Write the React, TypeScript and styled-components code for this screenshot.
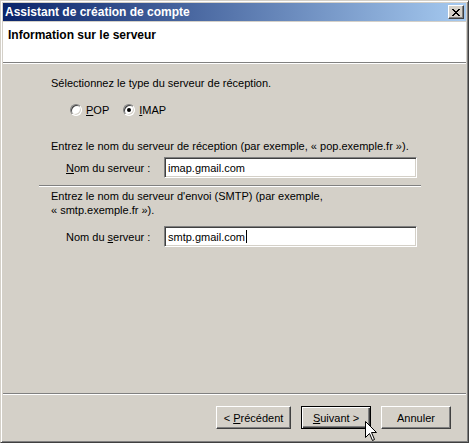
import React from 'react'
import styled, { createGlobalStyle } from 'styled-components'

const GlobalStyle = createGlobalStyle`
  html, body {
    margin: 0;
    padding: 0;
    background: #d4d0c8;
  }
  body {
    font-family: "Liberation Sans", Arial, sans-serif;
    font-size: 11px;
    color: #000;
  }
`

const App: React.FC = () => {
  return (
    <>
      <GlobalStyle />
      <Window>
        <TitleBar>
          <Title>Assistant de création de compte</Title>
          <CloseButton aria-label='Fermer'>
            <svg width='8' height='7' viewBox='0 0 8 7' shapeRendering='crispEdges'>
              <path
                fill='#000'
                d='M0 0h2v1H0zM6 0h2v1H6zM1 1h2v1H1zM5 1h2v1H5zM2 2h4v1H2zM3 3h2v1H3zM2 4h4v1H2zM1 5h2v1H1zM5 5h2v1H5zM0 6h2v1H0zM6 6h2v1H6z'
              />
            </svg>
          </CloseButton>
        </TitleBar>

        <Header>
          <HeaderTitle>Information sur le serveur</HeaderTitle>
        </Header>

        <Body>
          <Content>
            <Section>
              <Text>Sélectionnez le type du serveur de réception.</Text>
              <RadioGroup>
                <RadioOption>
                  <RadioMark />
                  <span><u>P</u>OP</span>
                </RadioOption>
                <RadioOption>
                  <RadioMark $checked />
                  <span><u>I</u>MAP</span>
                </RadioOption>
              </RadioGroup>
            </Section>

            <Section $gap={22}>
              <Text>Entrez le nom du serveur de réception (par exemple, « pop.exemple.fr »).</Text>
              <FieldRow $gap={4}>
                <Label><u>N</u>om du serveur :</Label>
                <TextBox>imap.gmail.com</TextBox>
              </FieldRow>
            </Section>

            <Separator />

            <Section $gap={2}>
              <Text>
                Entrez le nom du serveur d'envoi (SMTP) (par exemple,
                <br />« smtp.exemple.fr »).
              </Text>
              <FieldRow $gap={9}>
                <Label>Nom du <u>s</u>erveur :</Label>
                <TextBox>
                  smtp.gmail.com
                  <Caret />
                </TextBox>
              </FieldRow>
            </Section>
          </Content>
        </Body>

        <Footer>
          <ButtonRow>
            <Button $width={75}>&lt; <u>P</u>récédent</Button>
            <Button $width={70} $default><u>S</u>uivant &gt;</Button>
            <Button $width={70}>Annuler</Button>
          </ButtonRow>
        </Footer>

        <Pointer width='13' height='21' viewBox='0 0 13 21'>
          <path
            d='M0.5 0.5 L0.5 16.5 L4.5 12.5 L7.5 19.5 L9.5 18.5 L6.5 11.5 L11.5 11.5 Z'
            fill='#fff'
            stroke='#000'
            strokeWidth='1'
          />
        </Pointer>
      </Window>
    </>
  )
}

export default App


const Window = styled.div`
position: relative;
box-sizing: border-box;
width: 469px;
height: 443px;
padding: 1px;
display: flex;
flex-direction: column;
background: #d4d0c8;
border: 1px solid;
border-color: #d4d0c8 #404040 #404040 #d4d0c8;
box-shadow: inset 1px 1px 0 #fff, inset -1px -1px 0 #808080;
overflow: hidden;
`

const TitleBar = styled.div`
height: 18px;
margin: 1px;
display: flex;
align-items: center;
justify-content: space-between;
padding: 0 2px;
background: linear-gradient(to right, #0a246a, #a6caf0);
`

const Title = styled.span`
color: #fff;
font-weight: bold;
font-size: 12px;
white-space: nowrap;
`

const CloseButton = styled.div`
box-sizing: border-box;
width: 16px;
height: 14px;
display: flex;
align-items: center;
justify-content: center;
background: #d4d0c8;
border: 1px solid;
border-color: #fff #404040 #404040 #fff;
box-shadow: inset -1px -1px 0 #808080;
`

const Header = styled.div`
height: 41px;
margin: 0 1px;
box-sizing: border-box;
padding: 6px 0 0 5px;
background: #fff;
border-bottom: 1px solid #808080;
box-shadow: 0 1px 0 #fff;
`

const HeaderTitle = styled.h1`
margin: 0;
font-size: 12px;
line-height: 14px;
font-weight: bold;
`

const Body = styled.div`
flex: 1;
padding: 13px 0 0 37px;
`

const Content = styled.div`
width: 382px;
display: flex;
flex-direction: column;
`

const Section = styled.div<{ $gap?: number }>`
margin-top: ${(p) => p.$gap ?? 0}px;
padding-left: 12px;
display: flex;
flex-direction: column;
`

const Text = styled.p`
margin: 0;
line-height: 14px;
white-space: nowrap;
`

const RadioGroup = styled.div`
margin-top: 13px;
padding-left: 19px;
display: flex;
gap: 14px;
height: 14px;
align-items: center;
`

const RadioOption = styled.label`
display: flex;
align-items: center;
gap: 4px;
`

const RadioMark = styled.span<{ $checked?: boolean }>`
position: relative;
box-sizing: border-box;
width: 12px;
height: 12px;
border-radius: 50%;
background: #fff;
border: 1px solid;
border-color: #808080 #fff #fff #808080;
box-shadow: inset 1px 1px 0 #404040, inset -1px -1px 0 #d4d0c8;

&::after {
  content: '';
  display: ${(p) => (p.$checked ? 'block' : 'none')};
  position: absolute;
  left: 3px;
  top: 3px;
  width: 4px;
  height: 4px;
  border-radius: 50%;
  background: #000;
}
`

const FieldRow = styled.div<{ $gap: number }>`
margin-top: ${(p) => p.$gap}px;
padding-left: 15px;
display: flex;
align-items: center;
`

const Label = styled.span`
width: 98px;
flex-shrink: 0;
`

const TextBox = styled.div`
box-sizing: border-box;
width: 253px;
height: 21px;
padding: 0 3px;
display: flex;
align-items: center;
background: #fff;
border: 1px solid;
border-color: #808080 #fff #fff #808080;
box-shadow: inset 1px 1px 0 #404040, inset -1px -1px 0 #d4d0c8;
`

const Caret = styled.span`
display: inline-block;
width: 1px;
height: 13px;
margin-left: 1px;
background: #000;
`

const Separator = styled.hr`
margin: 7px 0 0 0;
height: 0;
border: 0;
border-top: 1px solid #808080;
border-bottom: 1px solid #fff;
`

const Footer = styled.div`
height: 48px;
margin: 0 1px;
box-sizing: border-box;
padding: 12px 15px 0 0;
border-top: 1px solid #808080;
box-shadow: inset 0 1px 0 #fff;
`

const ButtonRow = styled.div`
display: flex;
justify-content: flex-end;
gap: 10px;
`

const Button = styled.button<{ $width: number; $default?: boolean }>`
box-sizing: border-box;
width: ${(p) => p.$width}px;
height: 23px;
padding: 0;
font-family: "Liberation Sans", Arial, sans-serif;
font-size: 11px;
color: #000;
background: #d4d0c8;
border: 1px solid;
border-color: ${(p) => (p.$default ? '#000' : '#fff #404040 #404040 #fff')};
box-shadow: ${(p) =>
  p.$default
    ? 'inset 1px 1px 0 #fff, inset -1px -1px 0 #404040, inset -2px -2px 0 #808080'
    : 'inset -1px -1px 0 #808080'};
`

const Pointer = styled.svg`
position: absolute;
left: 364px;
top: 420px;
`
